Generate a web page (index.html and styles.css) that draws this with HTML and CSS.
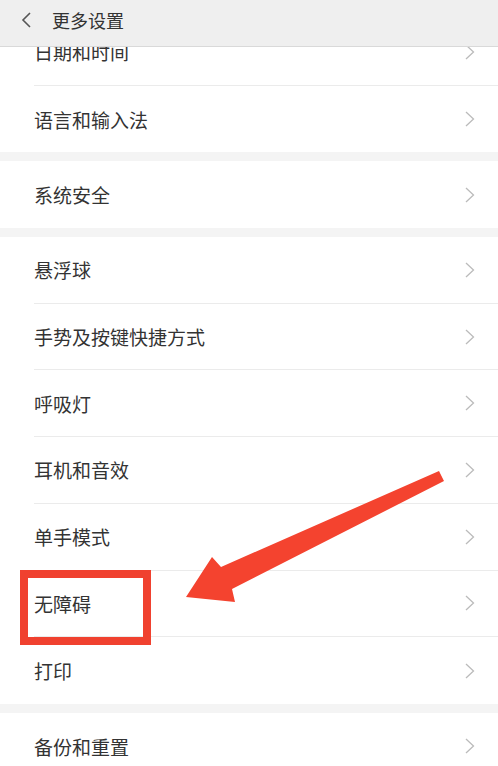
FILE: index.html
```html
<!DOCTYPE html>
<html lang="zh-CN">
<head>
    <meta charset="UTF-8">
    <meta name="viewport" content="width=device-width, initial-scale=1.0">
    <title>更多设置</title>
    <link rel="stylesheet" href="styles.css">
</head>
<body>
    <div class="header">
        <svg class="back" width="12" height="16" viewBox="0 0 12 16"><path d="M10 1 L3 8 L10 15" fill="none" stroke="#555" stroke-width="1.6"/></svg>
        <span class="title">更多设置</span>
    </div>

    <div class="list">
        <div class="group">
            <div class="row"><span>日期和时间</span><svg class="chev" viewBox="0 0 10 16"><path d="M1 1 L8.5 8 L1 15"/></svg></div>
            <div class="row"><span>语言和输入法</span><svg class="chev" viewBox="0 0 10 16"><path d="M1 1 L8.5 8 L1 15"/></svg></div>
        </div>
        <div class="group">
            <div class="row"><span>系统安全</span><svg class="chev" viewBox="0 0 10 16"><path d="M1 1 L8.5 8 L1 15"/></svg></div>
        </div>
        <div class="group">
            <div class="row"><span>悬浮球</span><svg class="chev" viewBox="0 0 10 16"><path d="M1 1 L8.5 8 L1 15"/></svg></div>
            <div class="row"><span>手势及按键快捷方式</span><svg class="chev" viewBox="0 0 10 16"><path d="M1 1 L8.5 8 L1 15"/></svg></div>
            <div class="row"><span>呼吸灯</span><svg class="chev" viewBox="0 0 10 16"><path d="M1 1 L8.5 8 L1 15"/></svg></div>
            <div class="row"><span>耳机和音效</span><svg class="chev" viewBox="0 0 10 16"><path d="M1 1 L8.5 8 L1 15"/></svg></div>
            <div class="row"><span>单手模式</span><svg class="chev" viewBox="0 0 10 16"><path d="M1 1 L8.5 8 L1 15"/></svg></div>
            <div class="row"><span>无障碍</span><svg class="chev" viewBox="0 0 10 16"><path d="M1 1 L8.5 8 L1 15"/></svg></div>
            <div class="row"><span>打印</span><svg class="chev" viewBox="0 0 10 16"><path d="M1 1 L8.5 8 L1 15"/></svg></div>
        </div>
        <div class="group">
            <div class="row"><span>备份和重置</span><svg class="chev" viewBox="0 0 10 16"><path d="M1 1 L8.5 8 L1 15"/></svg></div>
        </div>
    </div>

    <!-- annotation drawn over the screenshot -->
    <div class="mark-box"></div>
    <svg class="mark-arrow" width="498" height="766" viewBox="0 0 498 766">
        <polygon points="439,471 444,481 232,589 235,602 186,597 212,557 221,567" fill="#f4432f"/>
    </svg>
</body>
</html>
```

FILE: styles.css
```css
body {
    margin: 0;
    font-family: "Noto Sans CJK SC", "Noto Sans", sans-serif;
    background-color: #f4f4f4;
    color: #333;
    overflow: hidden;
    height: 766px;
    position: relative;
}
.header {
    position: relative;
    z-index: 2;
    height: 47px;
    background-color: #efefef;
    border-bottom: 1px solid #d9d9d9;
    display: flex;
    align-items: center;
    padding-left: 20px;
    padding-bottom: 6px;
    box-sizing: border-box;
}
.back {
    margin-right: 20px;
}
.title {
    font-size: 18px;
    color: #333;
    line-height: 1;
}
.list {
    margin-top: -28px;
}
.group {
    background-color: #fff;
    margin-bottom: 9px;
}
.row {
    height: 66.7px;
    margin-left: 34px;
    padding-right: 23px;
    display: flex;
    align-items: center;
    justify-content: space-between;
    border-bottom: 1px solid #ebebeb;
    box-sizing: border-box;
    font-size: 19px;
}
.row:last-child {
    border-bottom: none;
}
.row span {
    line-height: 1;
}
.chev {
    width: 10px;
    height: 16px;
    fill: none;
    stroke: #bbb;
    stroke-width: 1.3;
}
.mark-box {
    position: absolute;
    left: 20px;
    top: 570px;
    width: 131px;
    height: 75px;
    border: 8px solid #f0412f;
    box-sizing: border-box;
}
.mark-arrow {
    position: absolute;
    left: 0;
    top: 0;
}
```
